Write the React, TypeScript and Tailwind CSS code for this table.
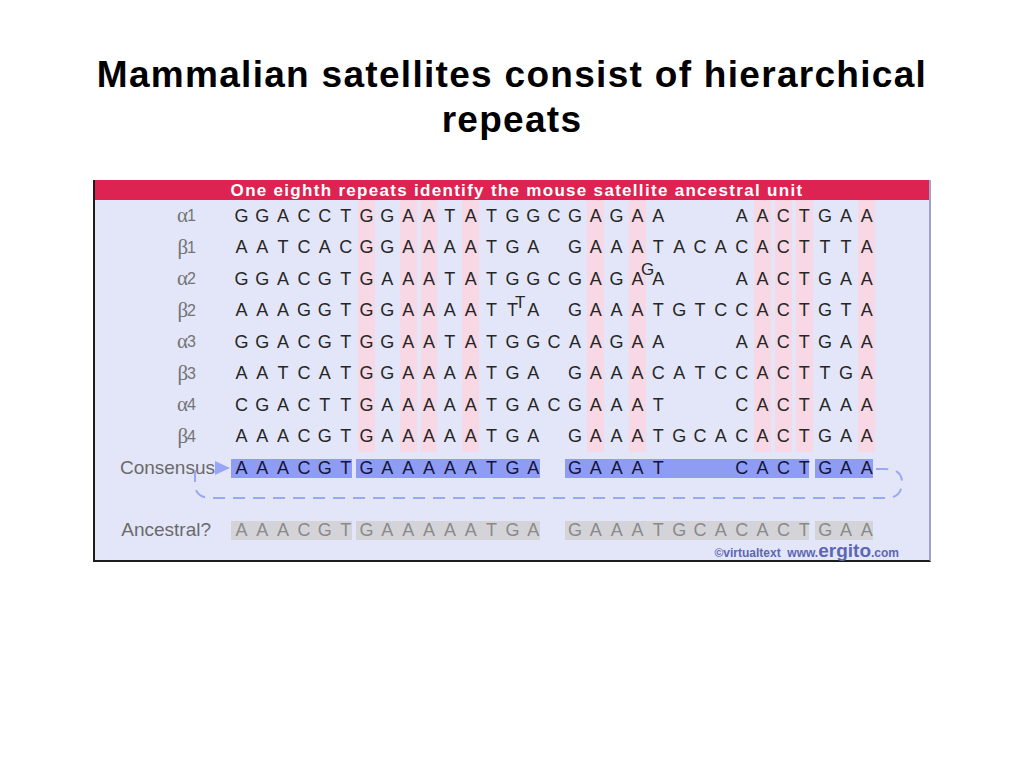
import React from "react";

const ROWS: { g: string; n: string; s: string; sup?: { at: number; ch: string; cls: string } }[] = [
  { g: "α", n: "1", s: "GGACCTGGAATATGGCGAGAA   AACTGAA" },
  { g: "β", n: "1", s: "AATCACGGAAAATGA GAAATACACACTTTA" },
  { g: "α", n: "2", s: "GGACGTGAAATATGGCGAGAA   AACTGAA", sup: { at: 19, ch: "G", cls: "left-[14px] top-[-2px]" } },
  { g: "β", n: "2", s: "AAAGGTGGAAAATTA GAAATGTCCACTGTA", sup: { at: 13, ch: "T", cls: "left-[13px] top-[-1px]" } },
  { g: "α", n: "3", s: "GGACGTGGAATATGGCAAGAA   AACTGAA" },
  { g: "β", n: "3", s: "AATCATGGAAAATGA GAAACATCCACTTGA" },
  { g: "α", n: "4", s: "CGACTTGAAAAATGACGAAAT   CACTAAA" },
  { g: "β", n: "4", s: "AAACGTGAAAAATGA GAAATGCACACTGAA" },
];

const PINK = new Set([6, 8, 9, 11, 17, 19, 25, 26, 27, 30]);

const CONS = "AAACGTGAAAAATGA GAAAT   CACTGAA";
const ANC = "AAACGTGAAAAATGA GAAATGCACACTGAA";

const SEGS = [
  { a: 0, b: 5, box: "w-[121.1px] mr-[4px]" },
  { a: 6, b: 14, box: "w-[183.6px] mr-[4px]" },
  { a: 15, b: 15, box: "w-[20.85px]", empty: true },
  { a: 16, b: 27, box: "w-[244.2px] mr-[6px]" },
  { a: 28, b: 30, box: "w-[58.5px] mr-[4px]" },
];

function Cell({ ch, pink, sup, supCls }: { ch: string; pink: boolean; sup?: string; supCls?: string }) {
  return (
    <div
      className={
        "relative w-[20.85px] shrink-0 flex items-center justify-center " +
        (pink ? "bg-[#f8d8e4] bg-clip-content px-[2px]" : "")
      }
    >
      <span>{ch === " " ? "\u00a0" : ch}</span>
      {sup && (
        <span className={"absolute text-[17px] leading-none " + (supCls || "")}>{sup}</span>
      )}
    </div>
  );
}

function BoxRow({ s, boxCls, textCls }: { s: string; boxCls: string; textCls: string }) {
  return (
    <div className={"flex items-center " + textCls}>
      {SEGS.map((seg, i) => (
        <div
          key={i}
          className={
            "flex shrink-0 h-[19px] items-center overflow-visible " +
            seg.box +
            (seg.empty ? "" : " " + boxCls)
          }
        >
          {s
            .slice(seg.a, seg.b + 1)
            .split("")
            .map((c, j) => (
              <div key={j} className="w-[20.85px] shrink-0 text-center">
                {c === " " ? "\u00a0" : c}
              </div>
            ))}
        </div>
      ))}
    </div>
  );
}

export default function App() {
  return (
    <div
      className="w-[1024px] h-[768px] bg-white flex flex-col"
      style={{ fontFamily: '"Liberation Sans", Arial, sans-serif' }}
    >
      <h1 className="pt-[52px] text-center text-[37px] leading-[45px] font-bold tracking-[1.3px] text-black">
        Mammalian satellites consist of hierarchical
        <br />
        repeats
      </h1>

      <div className="relative mt-[38px] ml-[93px] w-[838px] h-[382px] bg-[#e3e6f8] border-l-2 border-l-[#1c1c1c] border-b-2 border-b-[#1c1c1c] border-r-2 border-r-[#a3a3ca] flex flex-col">
        <div className="h-[21px] bg-[#dc2351] flex items-center justify-center pl-[10px] text-white font-bold text-[17px] tracking-[1.3px] leading-none">
          One eighth repeats identify the mouse satellite ancestral unit
        </div>

        {ROWS.map((r, i) => (
          <div key={i} className="flex h-[31.5px] shrink-0">
            <div className="w-[136px] shrink-0 flex items-center justify-end pr-[35px] text-[#747474] text-[18px]">
              <span className="text-[21px]" style={{ fontFamily: '"Liberation Serif", "DejaVu Serif", serif' }}>
                {r.g}
              </span>
              <span className="text-[16px] -ml-[1px]">{r.n}</span>
            </div>
            <div className="flex text-[18px] text-[#262626]">
              {r.s.split("").map((c, j) => (
                <Cell
                  key={j}
                  ch={c}
                  pink={PINK.has(j)}
                  sup={r.sup && r.sup.at === j ? r.sup.ch : undefined}
                  supCls={r.sup && r.sup.at === j ? r.sup.cls : undefined}
                />
              ))}
            </div>
          </div>
        ))}

        <div className="flex h-[31.5px] shrink-0 items-center">
          <div className="w-[136px] shrink-0 flex items-center justify-end text-[19px] text-[#6a6a6a]">
            <span>Consensus</span>
            <svg width="17" height="14" viewBox="0 0 17 14" className="-ml-[1px]">
              <path d="M1 0 L16 7 L1 14 Z" fill="#97a6f6" />
            </svg>
          </div>
          <BoxRow s={CONS} boxCls="bg-[#8e9df3]" textCls="text-[18px] text-[#14143a]" />
        </div>

        <div className="h-[30.75px] shrink-0" />

        <div className="flex h-[31.5px] shrink-0 items-center">
          <div className="w-[136px] shrink-0 flex items-center justify-end pr-[20px] text-[19px] text-[#6a6a6a]">
            Ancestral?
          </div>
          <BoxRow s={ANC} boxCls="bg-[#d4d4d8]" textCls="text-[18px] text-[#8a8a8a]" />
        </div>

        <div className="flex justify-end items-baseline pr-[30px] -mt-[5px] text-[#5d66b4] leading-none">
          <span className="text-[12px] font-semibold">©virtualtext&nbsp;&nbsp;www.</span>
          <span className="text-[19px] font-semibold">ergito</span>
          <span className="text-[12px] font-semibold">.com</span>
        </div>

        <svg
          className="absolute left-[-2px] top-0 pointer-events-none"
          width="838"
          height="382"
          viewBox="0 0 838 382"
        >
          <path
            d="M783,289 H792 Q809,289 809,302 Q809,318 793,318 H119 Q102,318 102,304 V282"
            fill="none"
            stroke="#9ba8f1"
            strokeWidth="2"
            strokeDasharray="12 8"
          />
        </svg>
      </div>
    </div>
  );
}
